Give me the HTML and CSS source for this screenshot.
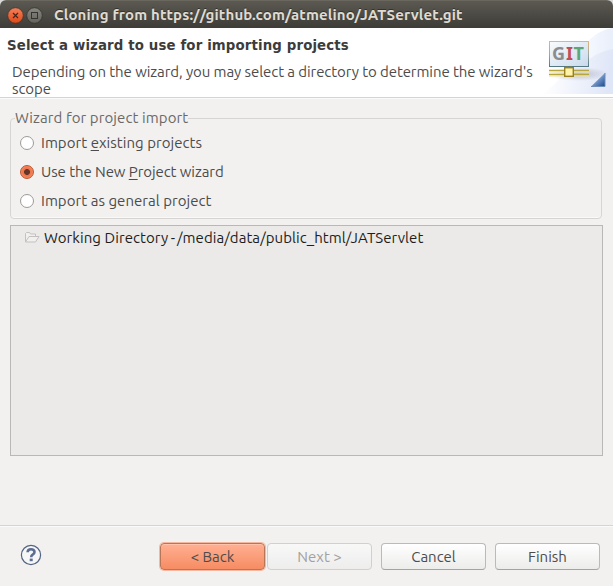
FILE: index.html
```html
<!DOCTYPE html>
<html lang="en">
<head>
<meta charset="utf-8">
<title>Cloning from https://github.com/atmelino/JATServlet.git</title>
<link rel="stylesheet" href="styles.css">
</head>
<body>
<div class="window">
  <header class="titlebar">
    <svg class="controls" width="36" height="18" viewBox="0 0 36 18" aria-hidden="true">
      <defs>
        <linearGradient id="close" x2="0" y2="1"><stop stop-color="#f5805a"/><stop offset="1" stop-color="#df4817"/></linearGradient>
        <linearGradient id="max" x2="0" y2="1"><stop stop-color="#888780"/><stop offset="1" stop-color="#63625b"/></linearGradient>
      </defs>
      <circle cx="8.5" cy="8.500" r="7.8" fill="url(#close)" stroke="#3d3832" stroke-width=".8"/>
      <path d="M6 6l5 5m0-5l-5 5" stroke="#4b2418" stroke-width="1.2"/>
      <circle cx="27.5" cy="8.500" r="7.8" fill="url(#max)" stroke="#35342f" stroke-width=".8"/>
      <rect x="24.5" y="5.500" width="6" height="6" fill="none" stroke="#34332f"/>
    </svg>
    <span class="title">Cloning from https://github.com/atmelino/JATServlet.git</span>
  </header>
  <section class="banner">
    <div class="banner-text">
      <h1>Select a wizard to use for importing projects</h1>
      <p>Depending on the wizard, you may select a directory to determine the wizard's<br>scope</p>
    </div>
    <svg class="banner-art" width="75" height="66" viewBox="0 0 75 66" aria-hidden="true">
      <defs>
        <linearGradient id="sweep" x1=".1" y1=".3" x2="1" y2=".4"><stop stop-color="#fff"/><stop offset="1" stop-color="#dfe6f7"/></linearGradient>
        <linearGradient id="beam"><stop stop-color="#f6f9fe"/><stop offset="1" stop-color="#e9effb"/></linearGradient>
        <linearGradient id="panel" x2="1" y2="1"><stop stop-color="#f9fbfd"/><stop offset="1" stop-color="#c9daec"/></linearGradient>
        <linearGradient id="edge" x2="0" y2="1"><stop stop-color="#e3b478"/><stop offset=".5" stop-color="#a2aaa4"/><stop offset="1" stop-color="#527984"/></linearGradient>
        <linearGradient id="corner" x2="1" y2="1"><stop offset=".3" stop-color="#9bbbe1"/><stop offset="1" stop-color="#18458e"/></linearGradient>
        <radialGradient id="shade"><stop stop-color="#77738d" stop-opacity=".4"/><stop offset="1" stop-color="#77738d" stop-opacity="0"/></radialGradient>
      </defs>
      <path d="M2 66C28 58 40 5 75 0v66z" fill="url(#sweep)"/>
      <path d="M47 18Q57 3 75 0v21Q62 23 50 32z" fill="url(#beam)"/>
      <ellipse cx="40" cy="46" rx="31" ry="7" fill="url(#shade)"/>
      <rect x="11.500" y="13.500" width="39" height="25" fill="url(#panel)" stroke="url(#edge)"/>
      <text class="git" y="32"><tspan x="14" fill="#8c8c8e">G</tspan><tspan x="28" fill="#c24d56">I</tspan><tspan x="35.500" fill="#5da677">T</tspan></text>
      <path d="M11 42.500h40M11 46.500h40" stroke="#b7a63e" stroke-width="1.500"/>
      <path d="M11 44h40M11 48h40" stroke="#eee5a6"/>
      <path d="M29 38v3m4-3v3" stroke="#978424"/>
      <rect x="26.700" y="39.700" width="8.600" height="8.600" fill="#fff2a9" stroke="#98801f" stroke-width="1.400"/>
      <path d="M53 58.500L67 45v13.500z" fill="url(#corner)"/>
      <path d="M53 58.500h14V45" fill="none" stroke="#6f8fb8"/>
    </svg>
  </section>
  <main class="content">
    <fieldset class="group">
      <legend>Wizard for project import</legend>
      <div class="option"><i class="radio"></i><span>Import <u>e</u>xisting projects</span></div>
      <div class="option"><i class="radio checked"></i><span class="tight">Use the New <u>P</u>roject wizard</span></div>
      <div class="option"><i class="radio"></i><span>Import as general project</span></div>
    </fieldset>
    <div class="tree">
      <div class="tree-row">
        <svg width="16" height="13" viewBox="0 0 16 13" fill="#f1f0ef" stroke="#c3c1bf" aria-hidden="true"><path d="M1.500 11V2.500l1-1h3l1 1.500h5V5M1.500 11L5 5.500h10L11.500 11z"/></svg>
        <span class="path">Working Directory<span class="dash"> - </span>/media/data/public_html/JATServlet</span>
      </div>
    </div>
  </main>
  <footer class="actions">
    <svg class="help" width="22" height="22" viewBox="0 0 22 22" aria-hidden="true">
      <circle cx="11" cy="11" r="9.600" fill="#f6f6f7" stroke="#526482" stroke-width="1.200"/>
      <path d="M7.600 8.300Q7.700 5.200 11 5.200Q14.500 5.200 14.500 8Q14.500 9.600 12.700 10.700Q11.200 11.600 11.200 13.200" fill="none" stroke="#5c6d91" stroke-width="2.600"/>
      <rect x="9.700" y="14.600" width="3" height="2.600" fill="#5c6d91"/>
    </svg>
    <button class="btn primary">&lt; Back</button>
    <button class="btn next" disabled>Next &gt;</button>
    <button class="btn cancel">Cancel</button>
    <button class="btn finish">Finish</button>
  </footer>
</div>
</body>
</html>
```
FILE: styles.css
```css
* { box-sizing: border-box; }
body {
  margin: 0;
  background: #d9d9d9;
  color: #4c4c4c;
  font: 15px/17px Ubuntu, "Noto Sans", sans-serif;
}
.window {
  width: 613px;
  height: 586px;
  display: flex;
  flex-direction: column;
  overflow: hidden;
  background: #f2f1f0;
  border-radius: 6px 6px 0 0;
}
.titlebar {
  height: 28px;
  flex: none;
  display: flex;
  align-items: center;
  padding: 2px 7px 0;
  background: linear-gradient(#5b5951, #3d3c37);
  border-top: 1px solid #69675e;
}
.title {
  margin-left: 11px;
  padding-bottom: 2px;
  color: #dfdbd2;
  font-weight: bold;
  letter-spacing: .15px;
  white-space: nowrap;
  text-shadow: 0 -1px #33322e;
}
.banner {
  height: 70px;
  flex: none;
  display: flex;
  background: #fff;
  border-bottom: 1px solid #d5d4d3;
}
.banner-text { width: 538px; padding: 9px 0 0 7px; white-space: nowrap; }
.banner h1 {
  margin: 0;
  font: bold 13.33px/18px "DejaVu Sans", sans-serif;
  letter-spacing: .13px;
  color: #3c3c3c;
}
.banner p { margin: 8px 0 0 5px; letter-spacing: -.08px; }
.banner .git { font: bold 18px "Noto Sans", sans-serif; }
.content {
  height: 428px;
  flex: none;
  padding: 11px 10px 0;
  border-top: 1px solid #fafafa;
  border-bottom: 1px solid #d5d4d3;
}
.group {
  width: 592px;
  height: 109px;
  margin: 0;
  padding: 1px 9px;
  border: 1px solid #d6d5d3;
  border-radius: 4px;
  box-shadow: inset 0 -1px #faf9f9;
}
.group legend { margin-left: -5px; padding: 0; color: #6b6967; height: 17px; line-height: 16px; letter-spacing: .09px; }
.option { display: flex; align-items: center; height: 29px; letter-spacing: .04px; }
.tight { letter-spacing: -.08px; }
.radio {
  width: 14px;
  height: 14px;
  margin-right: 7px;
  border: 1px solid #9d9b98;
  border-radius: 50%;
  background: #fff;
}
.radio.checked {
  border-color: #b95632;
  background: radial-gradient(circle, #633628 0 2.6px, #ee7750 3.3px 4.5px, #f78358 5px);
}
.option u { text-underline-offset: 2px; }
.tree {
  width: 593px;
  height: 231px;
  margin-top: 6px;
  padding: 3px 13px;
  background: #ebeae9;
  border: 1px solid #bab8b5;
  color: #1d1d1d;
}
.tree-row { display: flex; align-items: center; height: 17px; }
.path { margin-left: 4px; white-space: nowrap; letter-spacing: .07px; }
.dash { letter-spacing: -.8px; }
.actions {
  flex: 1;
  display: flex;
  align-items: flex-start;
  padding: 16px 13px 0 20px;
  border-top: 1px solid #fafafa;
}
.help { margin-top: 1px; }
.btn {
  width: 105px;
  height: 27px;
  padding: 0 0 1px;
  border: 1px solid #bcbab8;
  border-bottom-color: #a5a3a0;
  border-radius: 4px;
  background: linear-gradient(#fff, #ececeb);
  color: #4c4c4c;
  font: inherit;
}
.primary {
  margin-left: 118px;
  border-color: #b97556;
  background: linear-gradient(#ffb092, #f68c63);
  box-shadow: 0 0 0 1px #f3b8a2, inset 0 1px #ffc3ac;
}
.next { margin-left: 2px; }
.btn:disabled { color: #a3a1a0; background: linear-gradient(#f8f8f8, #eeedec); border-color: #d2d0ce; }
.cancel, .finish { margin-left: 9px; }
```
